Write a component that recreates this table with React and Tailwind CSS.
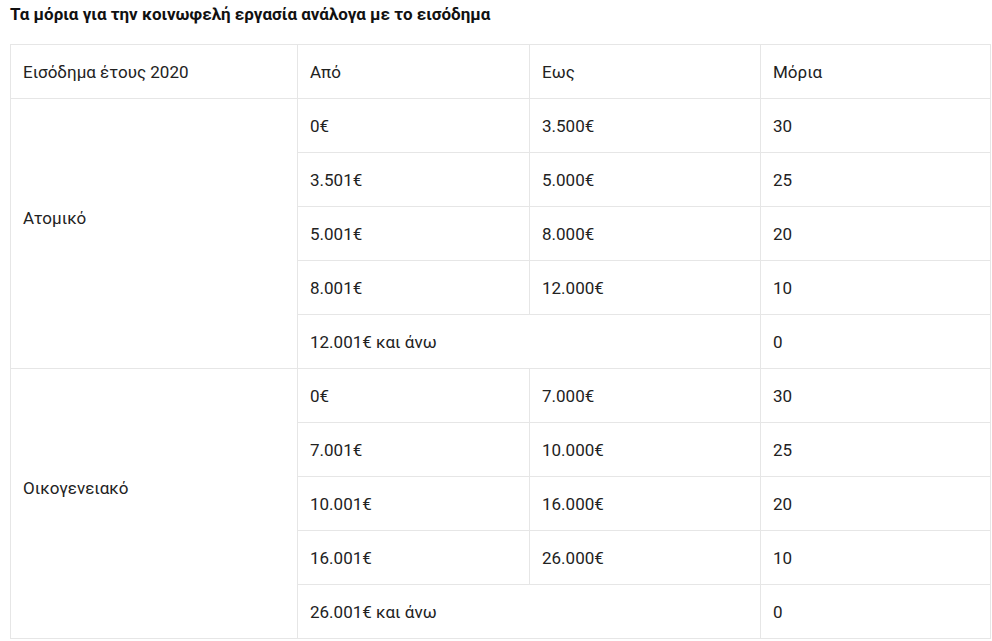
import React from "react";

const groups = [
  {
    label: "Ατομικό",
    rows: [
      ["0€", "3.500€", "30"],
      ["3.501€", "5.000€", "25"],
      ["5.001€", "8.000€", "20"],
      ["8.001€", "12.000€", "10"],
    ],
    last: ["12.001€ και άνω", "0"],
  },
  {
    label: "Οικογενειακό",
    rows: [
      ["0€", "7.000€", "30"],
      ["7.001€", "10.000€", "25"],
      ["10.001€", "16.000€", "20"],
      ["16.001€", "26.000€", "10"],
    ],
    last: ["26.001€ και άνω", "0"],
  },
];

const td = "border border-[#e6e6e6] px-3 h-[54px] align-middle";

export default function App() {
  return (
    <div className="bg-white min-h-screen pl-[10px] pr-[1px] pt-[4px] font-['Roboto',sans-serif] text-[17px] leading-[22px] text-[#222]">
      <h3 className="font-bold text-[17px] leading-[20px] text-[#111] mb-[20px]">
        Τα μόρια για την κοινωφελή εργασία ανάλογα με το εισόδημα
      </h3>
      <table className="w-full table-fixed border-collapse">
        <colgroup>
          <col className="w-[287px]" />
          <col className="w-[232px]" />
          <col className="w-[231px]" />
          <col />
        </colgroup>
        <tbody>
          <tr>
            <td className={td}>Εισόδημα έτους 2020</td>
            <td className={td}>Από</td>
            <td className={td}>Εως</td>
            <td className={td}>Μόρια</td>
          </tr>
          {groups.map((g) => (
            <React.Fragment key={g.label}>
              {g.rows.map((r, i) => (
                <tr key={i}>
                  {i === 0 && (
                    <td className={td + " pb-[32px]"} rowSpan={5}>
                      {g.label}
                    </td>
                  )}
                  <td className={td}>{r[0]}</td>
                  <td className={td}>{r[1]}</td>
                  <td className={td}>{r[2]}</td>
                </tr>
              ))}
              <tr>
                <td className={td} colSpan={2}>
                  {g.last[0]}
                </td>
                <td className={td}>{g.last[1]}</td>
              </tr>
            </React.Fragment>
          ))}
        </tbody>
      </table>
    </div>
  );
}
